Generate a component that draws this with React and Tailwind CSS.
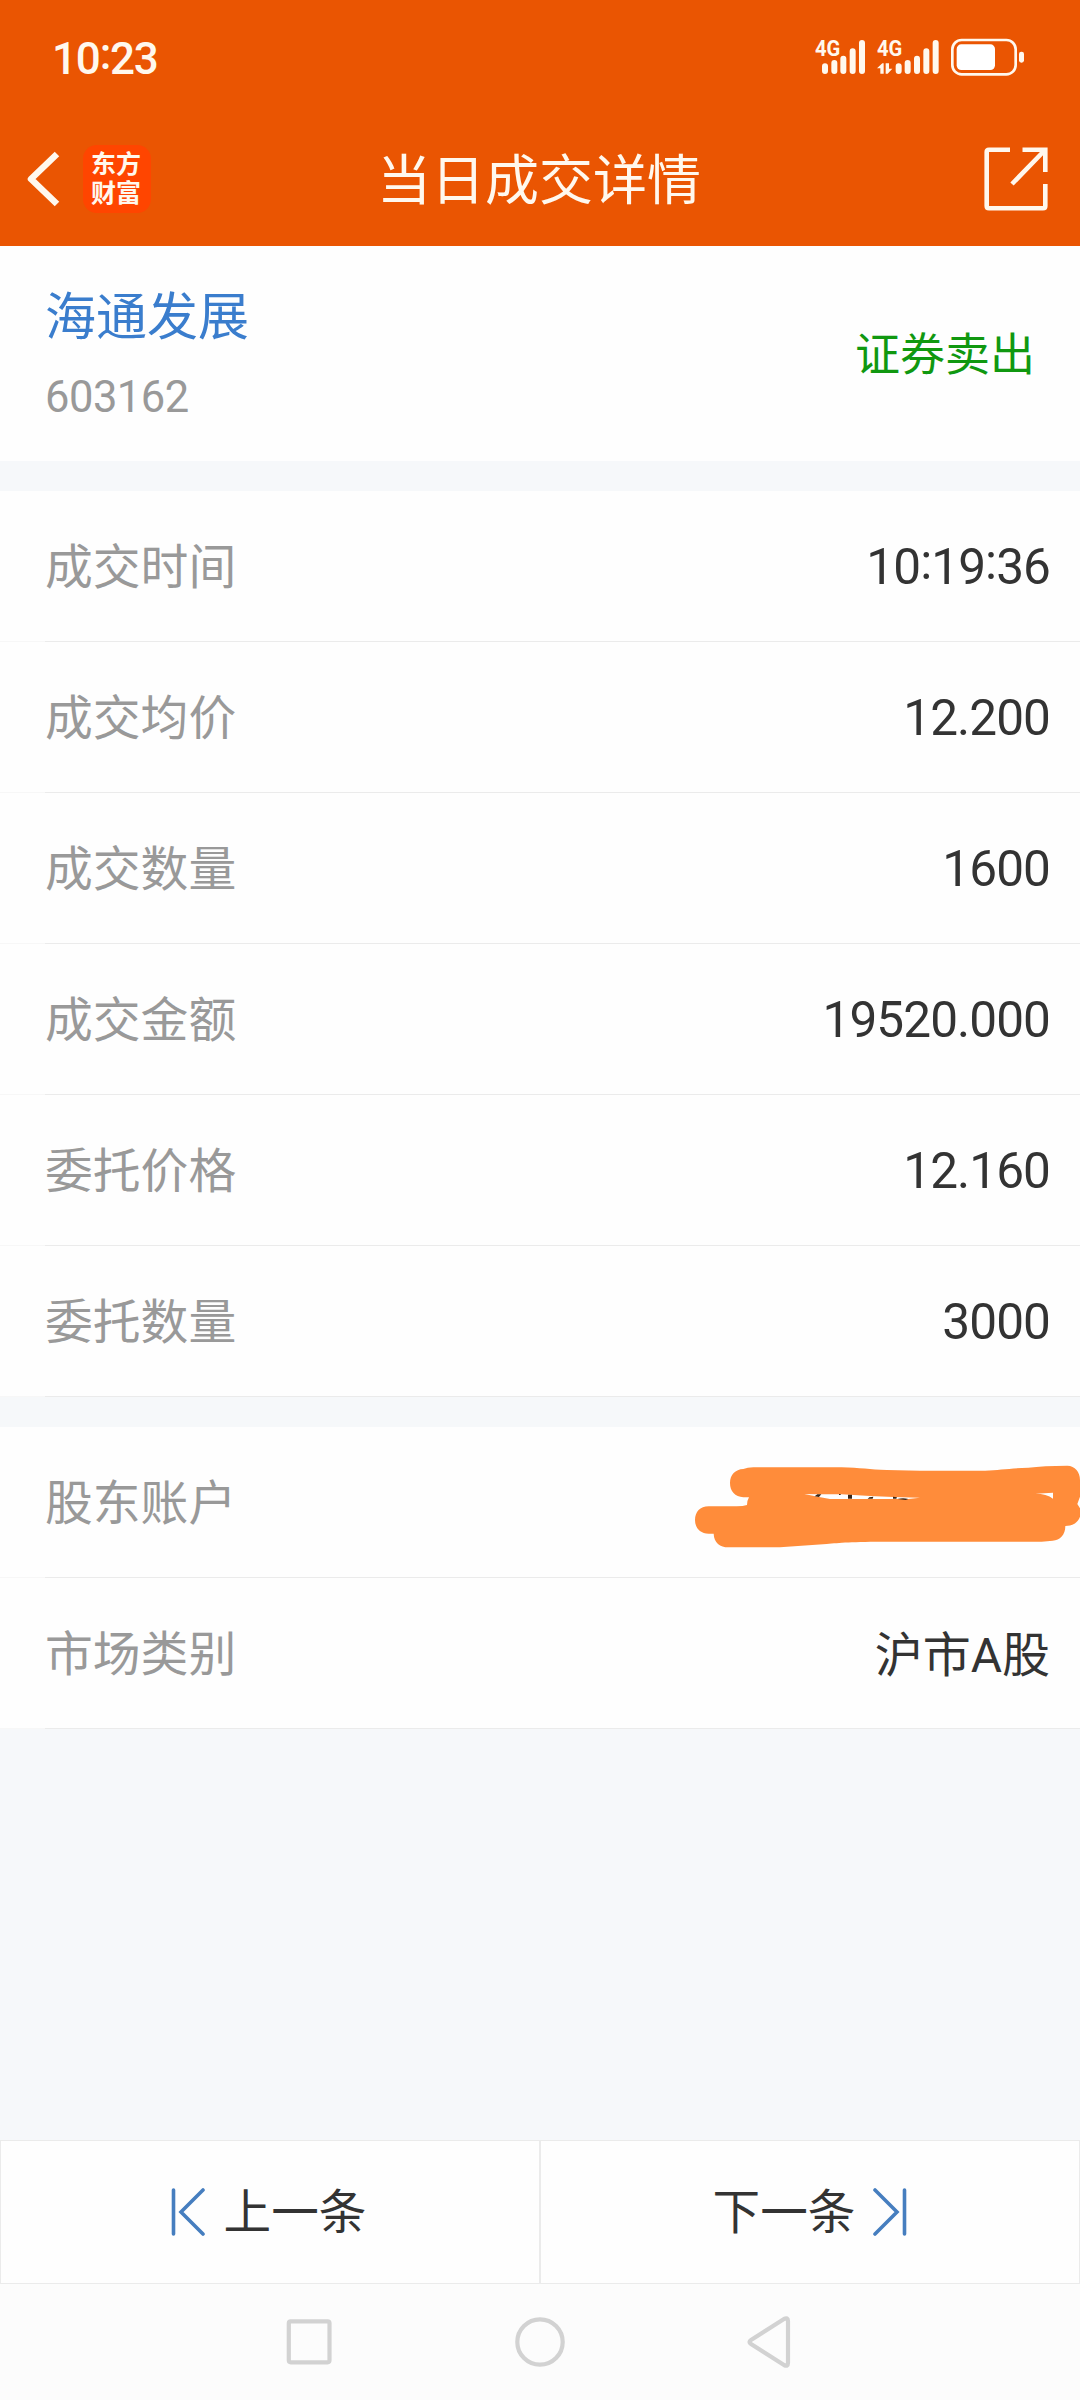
const tradeRows = [
  { label: '成交时间', value: '10:19:36' },
  { label: '成交均价', value: '12.200' },
  { label: '成交数量', value: '1600' },
  { label: '成交金额', value: '19520.000' },
  { label: '委托价格', value: '12.160' },
  { label: '委托数量', value: '3000' },
];

function SignalIcons() {
  return (
    <svg width="210" height="60" viewBox="105 82 630 180" fill="#fff8ee">
      <g fontFamily="Roboto, sans-serif" fontWeight="700" fontSize="67">
        <text x="105" y="167" textLength="76" lengthAdjust="spacingAndGlyphs">4G</text>
        <text x="291" y="167" textLength="76" lengthAdjust="spacingAndGlyphs">4G</text>
      </g>
      <g stroke="#fff8ee" strokeWidth="18" strokeLinecap="round">
        <path d="M135 197V211M163 187V211M190 174V211M218 152V211M246 127V211" />
        <path d="M356 197V211M383 187V211M411 174V211M439 152V211M467 127V211" />
      </g>
      <path d="M291 203L307 188H311V219H301V203ZM317 188H327V204H337L323 219H317Z" />
      <rect x="517" y="118" width="190" height="103" rx="28" fill="none" stroke="#fff8ee" strokeWidth="8" />
      <rect x="530" y="131" width="115" height="77" rx="14" fill="#fff" />
      <rect x="717" y="153" width="15" height="33" rx="7" />
    </svg>
  );
}

function ShareIcon() {
  return (
    <svg width="64" height="64" viewBox="0 0 64 64" fill="none" stroke="#fff8ee" strokeWidth="4.6">
      <path d="M26 2.7H5Q2.7 2.7 2.7 5V59Q2.7 61.3 5 61.3H59Q61.3 61.3 61.3 59V37" />
      <path d="M38.500 2.700H61.300V25M61 3L28 37" />
    </svg>
  );
}

function SkipIcon({ flip }) {
  return (
    <svg
      width="34"
      height="48"
      viewBox="0 0 34 48"
      fill="none"
      stroke="#467ebf"
      strokeWidth="3.6"
      strokeLinecap="round"
      className={flip ? '-scale-x-100' : ''}
    >
      <path d="M2.500 2V46M32 2L10 24L32 46" />
    </svg>
  );
}

// Marker strokes that hide the account number
function Scribble() {
  return (
    <svg className="absolute top-0 right-0" width="420" height="151" viewBox="0 141 1260 453">
      <path
        fill="#ff8c3a"
        fillRule="evenodd"
        d="M250 267Q262 262 280 262H545C600 263 630 269 680 270L780 272H975C1020 270 1050 265 1105 263Q1150 257 1222 257C1245 258 1260 275 1260 300V350L1252 372L1260 385V410C1254 426 1240 438 1216 438C1216 465 1200 481 1178 482L1145 485H690C570 485 540 488 500 492L360 502H205C180 502 162 488 161 461H146C120 461 105 443 105 420C105 396 120 379 146 379H230Q250 379 261 375Q261 362 267 352H250C225 350 210 334 210 309C210 284 226 268 250 267ZM433 342L478 343L545 343L630 348L700 351L780 353L745 357L510 357Q470 350 433 342ZM1126 341L1179 338V356Q1160 341 1126 341Z"
      />
      <path fill="#3a2616" d="M472 343H484L477 351L464 349ZM564 344H576V356H564ZM537 342H542V345H537ZM628 352L640 350L638 356H623ZM699 350L711 352L709 356H699ZM712 357Q730 352 745 357L737 360Z" />
    </svg>
  );
}

// Colons sit at mid height between the digits
function Digits({ children }) {
  return children.split(':').map((part, i) => (
    <span key={i}>
      {i > 0 && <span className="inline-block -translate-y-[5px]">:</span>}
      {part}
    </span>
  ));
}

function Row({ label, value, children }) {
  return (
    <div className="relative flex h-[151px] flex-col">
      <div className="flex grow items-center justify-between pl-[45px] pr-[30px]">
        <span className="pt-[5px] text-[47.800px] text-[#999]">{label}</span>
        {value && (
          <span className="pt-[4px] text-[49.500px] tracking-[-0.900px] text-[#333]">
            <Digits>{value}</Digits>
          </span>
        )}
        {children}
      </div>
      <div className="flex h-px">
        <div className="w-[45px] bg-[#f7f7f7]" />
        <div className="grow bg-[#ebebeb]" />
      </div>
    </div>
  );
}

export default function App() {
  return (
    <div className="flex h-[2400px] w-[1080px] flex-col overflow-hidden bg-[#f6f8fa] font-['Roboto','Noto_Sans_CJK_SC',sans-serif] leading-none">
      <header className="h-[246px] bg-[#ea5502] text-[#fff8ee]">
        <div className="flex h-[115px] items-center justify-between pl-[52px] pr-[55px]">
          <span className="pt-[3px] text-[44px] font-medium tracking-[-1.200px]">
            <Digits>10:23</Digits>
          </span>
          <SignalIcons />
        </div>
        <div className="grid h-[131px] grid-cols-3 items-center px-[26px] pb-1">
          <div className="flex items-center gap-[23px]">
            <svg width="34" height="56" viewBox="0 0 34 56" fill="none" stroke="#fff8ee" strokeWidth="6.500">
              <path d="M31 3L5 28L31 53" strokeLinejoin="round" />
            </svg>
            <div className="flex h-[68px] w-[68px] flex-col items-center justify-center gap-1 rounded-[14px] bg-[#ff4500] pr-[2px] text-[25px] font-bold">
              <span>东方</span>
              <span>财富</span>
            </div>
          </div>
          <h1 className="pt-[6px] pr-[2px] text-center text-[54px] whitespace-nowrap">当日成交详情</h1>
          <div className="flex justify-end pr-[6px]">
            <ShareIcon />
          </div>
        </div>
      </header>

      <section className="flex h-[215px] items-center justify-between bg-[#fefefe] pl-[45px] pr-[45px]">
        <div className="flex flex-col gap-[33px] pt-[5px]">
          <span className="text-[51px] text-[#3a7dcd]">海通发展</span>
          <span className="text-[43.500px] tracking-[-0.500px] text-[#999]">603162</span>
        </div>
        <span className="pt-[4px] text-[45px] text-[#109810]">证券卖出</span>
      </section>

      <section className="mt-[30px] bg-[#fefefe]">
        {tradeRows.map((row) => (
          <Row key={row.label} label={row.label} value={row.value} />
        ))}
      </section>

      <section className="mt-[30px] bg-[#fefefe]">
        <Row label="股东账户">
          <Scribble />
        </Row>
        <Row label="市场类别">
          <span className="pt-[5px] text-[48px] text-[#333]">沪市A股</span>
        </Row>
      </section>

      <div className="grow" />

      <div className="grid h-[144px] grid-cols-2 text-[47.600px] text-[#333]">
        <button className="flex items-center justify-center gap-[19px] border border-[#ebebeb] bg-[#fefefe] pr-[3px]">
          <SkipIcon />
          <span className="pt-[4px]">上一条</span>
        </button>
        <button className="flex items-center justify-center gap-[18px] border border-[#ebebeb] bg-[#fefefe]">
          <span className="pt-[4px]">下一条</span>
          <SkipIcon flip />
        </button>
      </div>

      <nav className="flex h-[116px] justify-center bg-[#fcfcfc]">
        <svg width="520" height="116" viewBox="280 2284 520 116" fill="none" stroke="#d2d2d2" strokeWidth="4.200">
          <rect x="288.800" y="2321.300" width="40.700" height="41" rx="2" />
          <circle cx="540" cy="2342" r="22.700" />
          <path d="M784 2319L751 2340Q748 2342 751 2344L784 2365Q788 2367 788 2363V2321Q788 2317 784 2319Z" strokeLinejoin="round" />
        </svg>
      </nav>
    </div>
  );
}
